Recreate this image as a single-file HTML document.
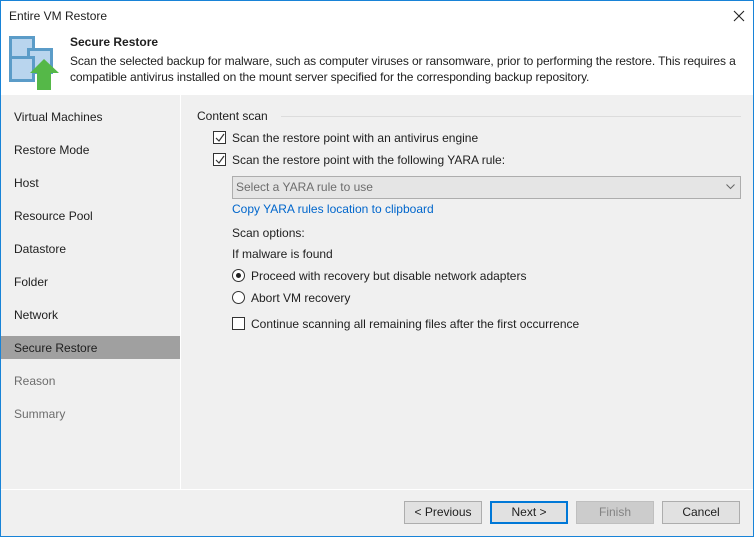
<!DOCTYPE html>
<html><head><meta charset="utf-8"><style>
*{margin:0;padding:0;box-sizing:border-box}
body{width:754px;height:537px;overflow:hidden;font-family:"Liberation Sans",sans-serif;font-size:12px;color:#1e1e1e;background:#f0f0f0;position:relative}
.win{position:absolute;left:0;top:0;width:754px;height:537px;border:1px solid #1883d7;}
.abs{position:absolute;white-space:nowrap}
.title{left:0;top:0;width:754px;height:30px;background:#fff}
.hdr{left:0;top:30px;width:754px;height:65px;background:#fff}
.nav{left:14px;font-size:12px;color:#1e1e1e}
.dis{color:#6d6d6d}
.cb{width:13px;height:13px;border:1px solid #333;background:#fff}
.rb{width:13px;height:13px;border:1px solid #333;border-radius:50%;background:#fff}
.btn{height:23px;border:1px solid #adadad;background:#e1e1e1;text-align:center;line-height:21px;top:501px;width:78px}
</style></head><body>
<div class="abs title"></div>
<div class="abs" style="left:9px;top:9px">Entire VM Restore</div>
<svg class="abs" style="left:733px;top:10px" width="12" height="12"><path d="M1 1L11 11M11 1L1 11" stroke="#222" stroke-width="1.1"/></svg>
<div class="abs hdr"></div>
<svg class="abs" style="left:0;top:0" width="70" height="95">
<rect x="10.5" y="37.5" width="23" height="23" fill="#b9d5ee" stroke="#5b9cc8" stroke-width="3"/>
<rect x="28.5" y="49.5" width="23" height="23" fill="#b9d5ee" stroke="#5b9cc8" stroke-width="3"/>
<rect x="10.5" y="57.5" width="23" height="23" fill="#b9d5ee" stroke="#5b9cc8" stroke-width="3"/>
<path d="M44 59L59 73H51V90H37V73H30Z" fill="#55b848"/>
</svg>
<div class="abs" style="left:70px;top:35px;font-weight:bold">Secure Restore</div>
<div class="abs" style="left:70px;top:53px;line-height:16px;letter-spacing:-0.12px">Scan the selected backup for malware, such as computer viruses or ransomware, prior to performing the restore. This requires a<br>compatible antivirus installed on the mount server specified for the corresponding backup repository.</div>
<div class="abs" style="left:180px;top:95px;width:1px;height:394px;background:#fff"></div>
<div class="abs" style="left:0;top:489px;width:754px;height:1px;background:#fff"></div>
<div class="abs" style="left:0;top:336px;width:180px;height:23px;background:#a0a0a0"></div>
<div class="abs nav" style="top:110px">Virtual Machines</div>
<div class="abs nav" style="top:143px">Restore Mode</div>
<div class="abs nav" style="top:176px">Host</div>
<div class="abs nav" style="top:209px">Resource Pool</div>
<div class="abs nav" style="top:242px">Datastore</div>
<div class="abs nav" style="top:275px">Folder</div>
<div class="abs nav" style="top:308px">Network</div>
<div class="abs nav" style="top:341px">Secure Restore</div>
<div class="abs nav dis" style="top:374px">Reason</div>
<div class="abs nav dis" style="top:407px">Summary</div>
<div class="abs" style="left:197px;top:109px">Content scan</div>
<div class="abs" style="left:281px;top:116px;width:460px;height:1px;background:#dcdcdc"></div>
<div class="abs cb" style="left:213px;top:131px"></div>
<svg class="abs" style="left:215px;top:133px" width="10" height="10"><path d="M1 5L4 8L9 1" stroke="#333" fill="none" stroke-width="1.2"/></svg>
<div class="abs" style="left:232px;top:131px">Scan the restore point with an antivirus engine</div>
<div class="abs cb" style="left:213px;top:153px"></div>
<svg class="abs" style="left:215px;top:155px" width="10" height="10"><path d="M1 5L4 8L9 1" stroke="#333" fill="none" stroke-width="1.2"/></svg>
<div class="abs" style="left:232px;top:153px">Scan the restore point with the following YARA rule:</div>
<div class="abs" style="left:232px;top:176px;width:509px;height:23px;background:#e5e5e5;border:1px solid #adadad"></div>
<div class="abs" style="left:236px;top:180px;color:#6d6d6d">Select a YARA rule to use</div>
<svg class="abs" style="left:726px;top:184px" width="9" height="6"><path d="M0.5 0.5L4.5 4.5L8.5 0.5" stroke="#666" fill="none"/></svg>
<div class="abs" style="left:232px;top:202px;color:#0066cc">Copy YARA rules location to clipboard</div>
<div class="abs" style="left:232px;top:226px">Scan options:</div>
<div class="abs" style="left:232px;top:247px">If malware is found</div>
<div class="abs rb" style="left:232px;top:269px"></div>
<div class="abs" style="left:236px;top:273px;width:5px;height:5px;border-radius:50%;background:#222"></div>
<div class="abs" style="left:251px;top:269px">Proceed with recovery but disable network adapters</div>
<div class="abs rb" style="left:232px;top:291px"></div>
<div class="abs" style="left:251px;top:291px">Abort VM recovery</div>
<div class="abs cb" style="left:232px;top:317px"></div>
<div class="abs" style="left:251px;top:317px">Continue scanning all remaining files after the first occurrence</div>
<div class="abs btn" style="left:404px">&lt; Previous</div>
<div class="abs btn" style="left:490px;border:2px solid #0078d7;line-height:19px">Next &gt;</div>
<div class="abs btn" style="left:576px;background:#cccccc;border-color:#bfbfbf;color:#838383">Finish</div>
<div class="abs btn" style="left:662px">Cancel</div>
<div class="win"></div>
</body></html>
